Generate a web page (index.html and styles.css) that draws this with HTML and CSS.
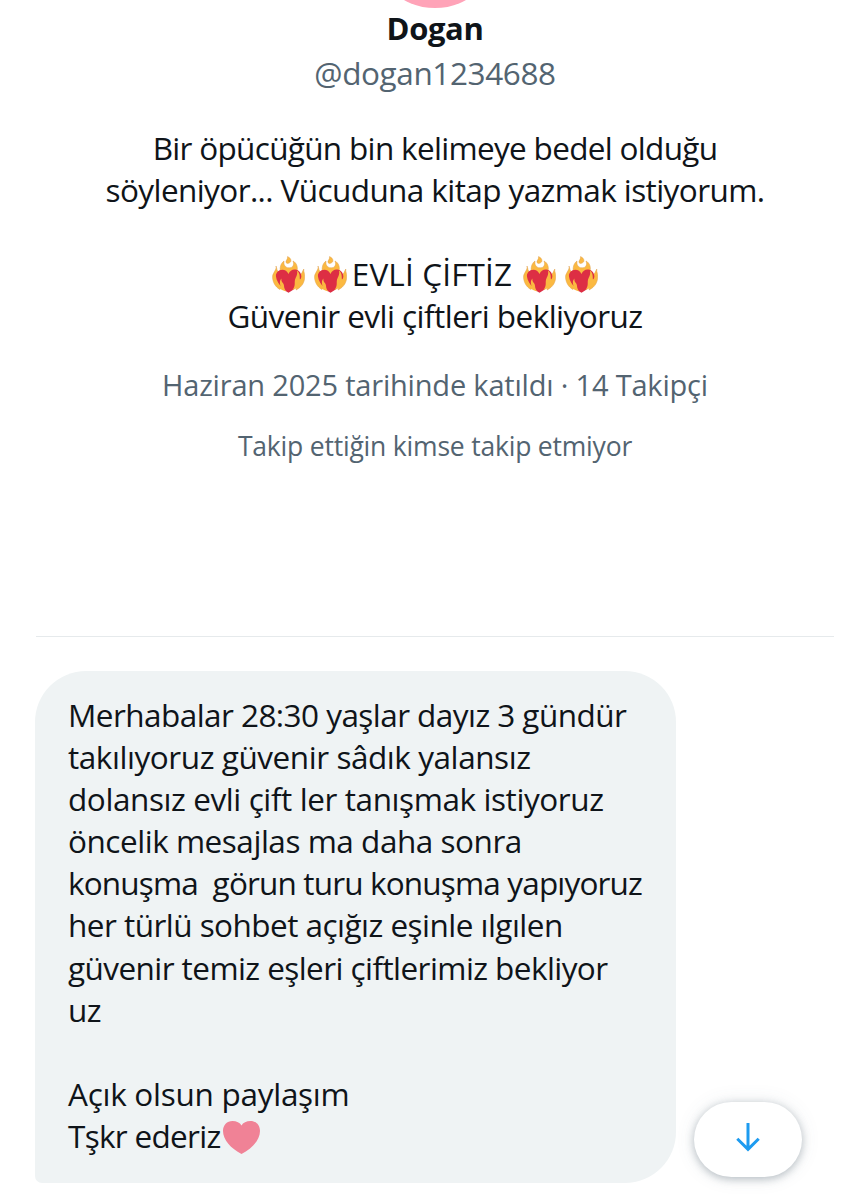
FILE: index.html
```
<!DOCTYPE html>
<html lang="tr">
<head>
    <meta charset="UTF-8">
    <meta name="viewport" content="width=device-width, initial-scale=1.0">
    <title>Dogan</title>
    <link rel="stylesheet" href="styles.css">
</head>
<body>
    <svg class="symbols" width="0" height="0">
        <symbol id="fire-heart" viewBox="0 0 33 37">
            <path fill="#fbb941" stroke="#dfa050" stroke-width="0.5" d="M4 10C5 13 1 17 .6 20C.2 25 3 31 8 33.500L7 16C4.500 15 5 12 4 10ZM31.800 13C30 16 30 18 28 19L24 34C30 31 33 26 32.600 20C32.500 17 31.500 16 31.800 13Z"/>
            <path fill="#fbb941" stroke="#dfa050" stroke-width="0.5" d="M8.500 17C7.500 12 8.500 7.500 12 5C11.500 8 12.500 10 14 11C16 12.500 20 12 21 10C22 8 21.500 6.500 21 5C25 7 26.500 12 24.500 17C22 18 19 17 16.500 19C14 17 11 18 8.500 17Z"/>
            <path fill="#fbb941" stroke="#dfa050" stroke-width="0.5" d="M15.500 .6C16 3.500 13.500 4.500 14 6.500C15 8 17 7.500 18.500 6C19.800 4 18 1.500 15.500 .6Z"/>
            <path fill="#dd2e44" d="M16.500 18C14.500 13 8.500 12.500 5.300 16C3 19 3 23.500 5 27C7.500 31 12 34.500 16.500 36.700C22 34 27 29.500 29 24C30.300 19.500 28.500 15 24.500 13.800C21 12.800 18 14.500 16.500 18Z"/>
            <path fill="#fbb941" d="M3.500 16C1 20 .5 25 3.500 28.500C6 32 10 34.500 14.500 35.500C11.500 32.500 12.500 30 11.500 28C10.500 26 9 25.500 9.500 22.500C7.500 24 7.500 27 8.500 30C5 26 3.500 21 3.500 16ZM20.500 34C23.500 30 22.500 27.500 22.800 25C23.300 21 26 19.500 25 14.500C28.500 17 27.500 21.500 28 23.500C30 22 30.500 19 32.300 16C32.300 22 31 26.500 28 29.500C26 31.500 23 33 20.500 34Z"/>
        </symbol>
    </svg>

    <div class="profile">
        <div class="avatar"></div>
        <div class="name">Dogan</div>
        <div class="handle">@dogan1234688</div>
        <div class="bio">
            <div class="line l1">Bir öpücüğün bin kelimeye bedel olduğu</div>
            <div class="line l2">söyleniyor... Vücuduna kitap yazmak istiyorum.</div>
            <div class="line empty"></div>
            <div class="line hearts">
                <svg class="fire"><use href="#fire-heart"/></svg>
                <svg class="fire"><use href="#fire-heart"/></svg>
                <span class="l3">EVLİ ÇİFTİZ</span>
                <svg class="fire"><use href="#fire-heart"/></svg>
                <svg class="fire"><use href="#fire-heart"/></svg>
            </div>
            <div class="line l4">Güvenir evli çiftleri bekliyoruz</div>
        </div>
        <div class="joined">Haziran 2025 tarihinde katıldı · 14 Takipçi</div>
        <div class="followers">Takip ettiğin kimse takip etmiyor</div>
    </div>

    <div class="messages">
        <div class="bubble">
            <div class="line m1">Merhabalar 28:30 yaşlar dayız 3 gündür</div>
            <div class="line m2">takılıyoruz güvenir sâdık yalansız</div>
            <div class="line m3">dolansız evli çift ler tanışmak istiyoruz</div>
            <div class="line m4">öncelik mesajlas ma daha sonra</div>
            <div class="line m5">konuşma  görun turu konuşma yapıyoruz</div>
            <div class="line m6">her türlü sohbet açığız eşinle ılgılen</div>
            <div class="line m7">güvenir temiz eşleri çiftlerimiz bekliyor</div>
            <div class="line m8">uz</div>
            <div class="line empty"></div>
            <div class="line m9">Açık olsun paylaşım</div>
            <div class="line last"><span class="m10">Tşkr ederiz</span><svg class="heart" viewBox="0 0 37 33"><path fill="#f08296" d="M18.500 33C8 27.500 0 19 0 10C0 4 4 0 9.500 0C13.500 0 17 1.500 18.500 4.500C20 1.500 23.500 0 27.500 0C33 0 37 4 37 10C37 19 29 27.500 18.500 33Z"/></svg></div>
        </div>
        <button class="scroll-down">
            <svg viewBox="0 0 24 29"><path fill="none" stroke="#1d9bf0" stroke-width="3" d="M12 0V26M1.300 15.800L12 26.300L22.700 15.800"/></svg>
        </button>
    </div>
</body>
</html>
```

FILE: styles.css
```
body {
    margin: 0;
    height: 1200px;
    overflow: hidden;
    background-color: #fff;
    color: #0f1419;
    font-family: "Open Sans", sans-serif;
    font-size: 31.5px;
    line-height: 42.1px;
}
.symbols {
    display: block;
}
.profile {
    display: flex;
    flex-direction: column;
    align-items: center;
    box-sizing: border-box;
    height: 637px;
    margin: 0 24px 0 36px;
    border-bottom: 1px solid #e6eaec;
    white-space: pre;
}
.avatar {
    flex: none;
    width: 128px;
    height: 128px;
    margin-top: -120px;
    border-radius: 50%;
    background-color: #ffa3b8;
}
.name {
    margin-top: -1px;
    font-weight: 700;
    font-size: 31px;
    letter-spacing: -0.4px;
}
.handle {
    margin-top: 3px;
    color: #536471;
    letter-spacing: -0.4px;
}
.bio {
    display: flex;
    flex-direction: column;
    align-items: center;
    margin-top: 33px;
}
.line {
    height: 42.1px;
    white-space: pre;
}
.bio .line {
    height: 42px;
    line-height: 42px;
}

/* tracking per line */
.l1 { letter-spacing: -0.68px; }
.l2 { letter-spacing: -0.59px; }
.l4 { letter-spacing: -0.53px; }
.m1 { letter-spacing: -0.55px; }
.m2 { letter-spacing: -0.44px; }
.m3 { letter-spacing: -0.41px; }
.m4 { letter-spacing: -0.47px; }
.m5 { letter-spacing: -0.84px; }
.m6 { letter-spacing: -0.53px; }
.m7 { letter-spacing: -0.57px; }
.m8 { letter-spacing: -0.5px; }
.m9 { letter-spacing: -0.27px; }
.m10 { letter-spacing: -0.7px; }

.hearts {
    display: flex;
    align-items: center;
    gap: 9px;
}
.hearts .l3 {
    margin: 0 2px 0 -4px;
    letter-spacing: 0.15px;
}
.fire {
    width: 33px;
    height: 37px;
}
.joined {
    margin-top: 27px;
    color: #536471;
    font-size: 29px;
    letter-spacing: -0.19px;
}
.followers {
    margin-top: 19px;
    color: #536471;
    font-size: 26.5px;
    letter-spacing: -0.2px;
}
.messages {
    display: flex;
    align-items: flex-end;
    gap: 18px;
    margin: 34px 0 0 35px;
}
.bubble {
    box-sizing: border-box;
    width: 641px;
    height: 512px;
    padding: 23px 33px;
    border-radius: 51px 51px 51px 7px;
    background-color: #eff3f4;
}
.last {
    display: flex;
    align-items: center;
    gap: 2px;
}
.heart {
    width: 37px;
    height: 33px;
    margin-top: 4px;
}
.scroll-down {
    display: flex;
    align-items: center;
    justify-content: center;
    width: 108px;
    height: 75px;
    margin-bottom: 6px;
    padding: 0 1px 4px 0;
    border: none;
    border-radius: 38px;
    background-color: #fff;
    box-shadow: 0 2px 8px rgba(83, 100, 113, 0.4), 0 0 20px rgba(83, 100, 113, 0.1);
}
.scroll-down svg {
    width: 24px;
    height: 29px;
}
```
